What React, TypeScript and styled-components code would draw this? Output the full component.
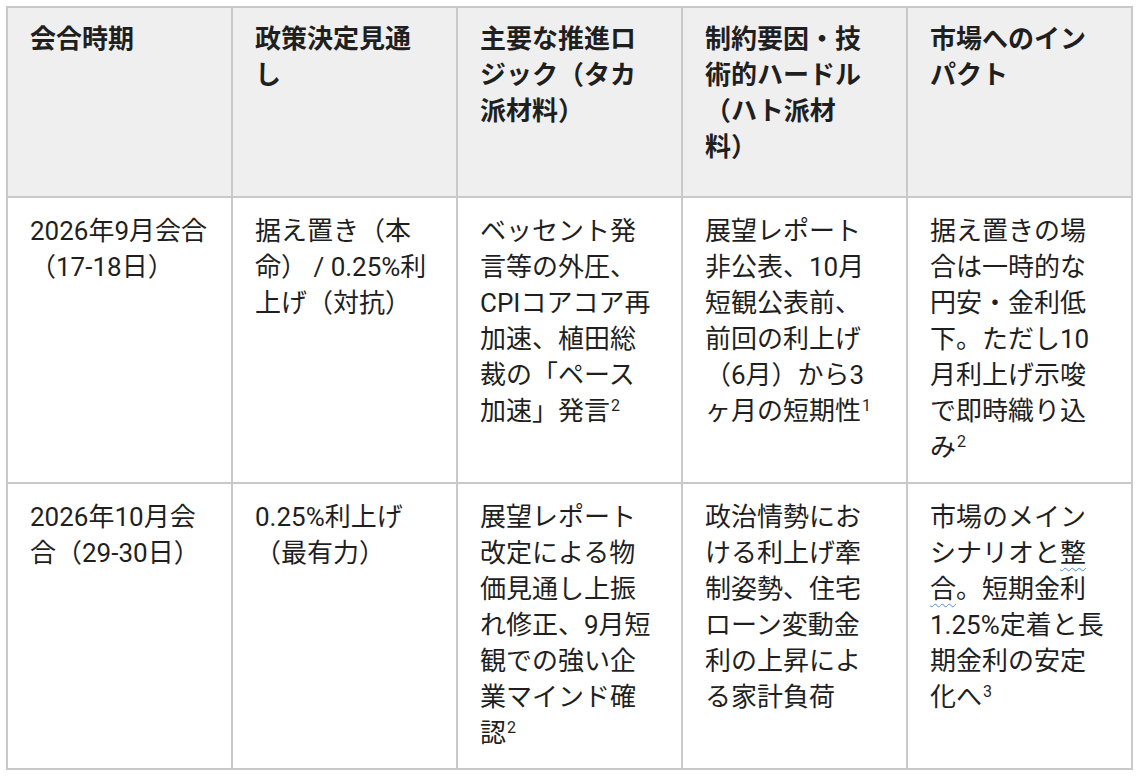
import * as React from "react";
import styled, { createGlobalStyle } from "styled-components";

const GlobalStyle = createGlobalStyle`
  html, body {
    margin: 0;
    padding: 0;
    background: #ffffff;
  }
  body {
    padding: 6px;
    font-family: Roboto, "Noto Sans CJK JP", sans-serif;
    color: #1f1f1f;
  }
`;

const headers = [
  "会合時期",
  "政策決定見通し",
  "主要な推進ロジック（タカ派材料）",
  "制約要因・技術的ハードル（ハト派材料）",
  "市場へのインパクト",
];

const Sup = styled.sup`
  font-size: 16px;
  line-height: 0;
  vertical-align: 0.55em;
  margin-left: 1px;
`;

const Spell = styled.span`
  text-decoration: underline wavy #4c8ce0;
  text-decoration-thickness: 1px;
  text-underline-offset: 5px;
`;

const rows: React.ReactNode[][] = [
  [
    "2026年9月会合（17-18日）",
    "据え置き（本命） / 0.25%利上げ（対抗）",
    <>ベッセント発言等の外圧、CPIコアコア再加速、植田総裁の「ペース加速」発言<Sup>2</Sup></>,
    <>展望レポート非公表、10月短観公表前、前回の利上げ（6月）から3ヶ月の短期性<Sup>1</Sup></>,
    <>据え置きの場合は一時的な円安・金利低下。ただし10月利上げ示唆で即時織り込み<Sup>2</Sup></>,
  ],
  [
    "2026年10月会合（29-30日）",
    "0.25%利上げ（最有力）",
    <>展望レポート改定による物価見通し上振れ修正、9月短観での強い企業マインド確認<Sup>2</Sup></>,
    "政治情勢における利上げ牽制姿勢、住宅ローン変動金利の上昇による家計負荷",
    <>市場のメインシナリオと<Spell>整合</Spell>。短期金利1.25%定着と長期金利の安定化へ<Sup>3</Sup></>,
  ],
];

const Table = styled.table`
  width: 1127px;
  table-layout: fixed;
  border-collapse: collapse;
  font-size: 26px;
  line-height: 36px;
  text-spacing-trim: space-all;
`;

const Th = styled.th`
  background: #efefef;
  border: 2px solid #c9c9c9;
  padding: 13px 22px 31px;
  text-align: left;
  vertical-align: top;
  font-weight: 700;
  color: #1f1f1f;
`;

const Td = styled.td`
  border: 2px solid #c9c9c9;
  padding: 15px 22px 17px;
  vertical-align: top;
  font-weight: 400;
  color: #1f1f1f;
`;

export default function App() {
  return (
    <>
      <GlobalStyle />
      <Table>
        <colgroup>
          {headers.map((h) => (
            <col key={h} style={{ width: "20%" }} />
          ))}
        </colgroup>
        <thead>
          <tr>
            {headers.map((h) => (
              <Th key={h}>{h}</Th>
            ))}
          </tr>
        </thead>
        <tbody>
          {rows.map((row, i) => (
            <tr key={i}>
              {row.map((cell, j) => (
                <Td key={j}>{cell}</Td>
              ))}
            </tr>
          ))}
        </tbody>
      </Table>
    </>
  );
}
